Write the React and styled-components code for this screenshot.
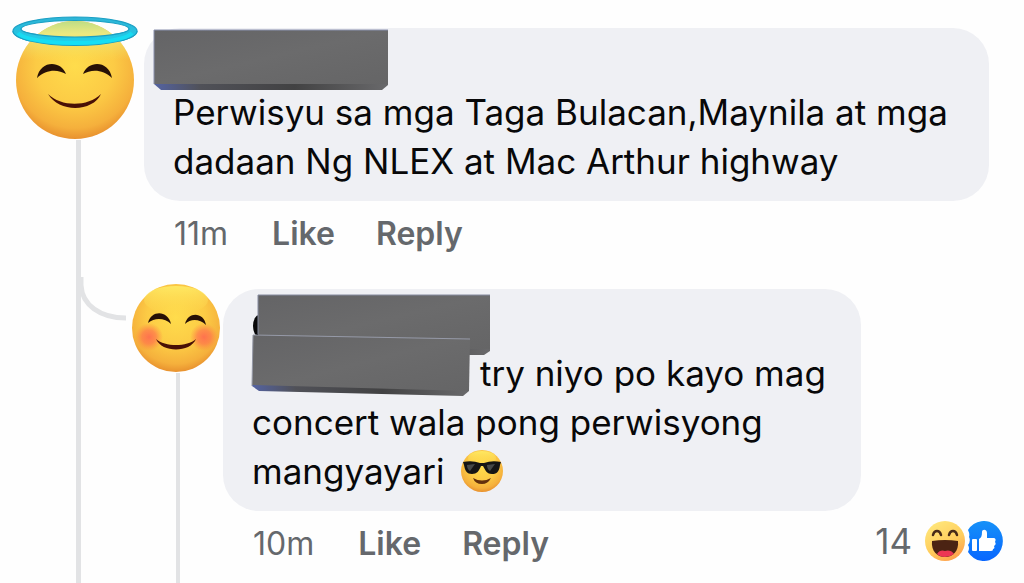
import React from "react";
import styled, { createGlobalStyle } from "styled-components";

const GlobalStyle = createGlobalStyle`
  * {
    box-sizing: border-box;
  }

  body {
    margin: 0;
    background-color: #fefefe;
    font-family: Inter, "Liberation Sans", sans-serif;
    color: #080809;
  }
`;

const Thread = styled.main`
  display: flex;
  min-height: 100vh;
  padding: 14px 20px 0 12px;
`;

const Rail = styled.div`
  display: flex;
  flex-direction: column;
  align-items: center;
  flex: none;
  width: ${(props) => props.$width}px;

  svg {
    display: block;
    flex: none;
  }
`;

const RailLine = styled.div`
  flex: 1;
  width: ${(props) => props.$thickness}px;
  margin-left: ${(props) => props.$thickness}px;
  background-color: #e2e3e5;
`;

const Content = styled.div`
  flex: 1;
  min-width: 0;
  display: flex;
  flex-direction: column;
`;

const CommentBlock = styled.article`
  padding: 14px 15px 0 4px;
`;

const Bubble = styled.div`
  position: relative;
  padding: 0 29px 15px;
  border-radius: 36px;
  background-color: #eff0f4;
`;

const ReplyBubble = styled(Bubble)`
  max-width: 638px;
`;

const NameRow = styled.div`
  height: 60px;
`;

const Cover = styled.svg`
  position: absolute;
  top: ${(props) => props.$top}px;
  left: ${(props) => props.$left}px;
`;

const Message = styled.p`
  margin: 0;
  font-size: 35px;
  line-height: 49px;
  text-indent: ${(props) => props.$indent || 0}px;

  svg {
    margin-left: 6px;
    vertical-align: -9px;
  }
`;

const Footer = styled.div`
  display: flex;
  align-items: center;
  height: 64px;
  padding-left: 30px;
  font-size: 32px;
  color: #65686c;
`;

const Time = styled.time`
  margin-right: 44px;
`;

const Action = styled.button`
  margin: 0 41px 0 0;
  padding: 0;
  border: none;
  background: none;
  font: inherit;
  font-weight: 600;
  color: inherit;
  cursor: pointer;
`;

const Reactions = styled.div`
  display: flex;
  align-items: center;
  margin-left: auto;
  padding-bottom: 5px;
  font-size: 35px;

  svg {
    display: block;
  }
`;

const Count = styled.span`
  margin-right: 13px;
`;

const ReplyBlock = styled.article`
  position: relative;
  display: flex;
  flex: 1;
  gap: 3px;
  margin-left: -8px;
  padding-top: 18px;
`;

const ReplyContent = styled.div`
  flex: 1;
  min-width: 0;
  padding-top: 6px;
`;

const Connector = styled.svg`
  position: absolute;
  top: 12px;
  left: -55px;
`;

const FaceFill = ({ id }) => (
  <defs>
    <radialGradient id={id} cx="0.5" cy="0.38" r="0.66">
      <stop offset="0" stopColor="#ffdc4c" />
      <stop offset="0.5" stopColor="#fccb45" />
      <stop offset="0.8" stopColor="#f5b03c" />
      <stop offset="1" stopColor="#e38428" />
    </radialGradient>
    <linearGradient id={`${id}-shine`} x1="0" y1="0" x2="0" y2="1">
      <stop offset="0" stopColor="#fff06a" stopOpacity="0.8" />
      <stop offset="1" stopColor="#ffe054" stopOpacity="0" />
    </linearGradient>
  </defs>
);

const HaloRing = (props) => (
  <g {...props}>
    <path
      d="M13 31 A62 14 0 0 1 137 31 A62 14.5 0 0 1 13 31Z M21 29 A54 8 0 0 0 129 29 A54 8.5 0 0 0 21 29Z"
      fillRule="evenodd"
      fill="url(#halo-ring)"
      stroke="#1a9fc4"
      strokeWidth="1.2"
    />
    <path d="M18 33 C24 40 50 43 75 43 C100 43 126 40 132 33" fill="none" stroke="#12e4f8" strokeWidth="4" opacity="0.7" />
  </g>
);

const HaloAvatar = () => (
  <svg width="128" height="126" viewBox="12 14 128 126" role="img" aria-label="Commenter">
    <FaceFill id="halo-face" />
    <defs>
      <linearGradient id="halo-ring" x1="0" y1="0" x2="0" y2="1">
        <stop offset="0" stopColor="#2fb4d6" />
        <stop offset="0.6" stopColor="#25c4e2" />
        <stop offset="1" stopColor="#1cd6ee" />
      </linearGradient>
      <linearGradient id="halo-top" x1="0" y1="0" x2="0" y2="1">
        <stop offset="0" stopColor="#b9dc86" />
        <stop offset="0.35" stopColor="#ecec86" stopOpacity="0.9" />
        <stop offset="1" stopColor="#f5e55e" stopOpacity="0" />
      </linearGradient>
      <clipPath id="halo-face-area">
        <circle cx="75" cy="80" r="59" />
      </clipPath>
      <clipPath id="halo-front">
        <rect x="12" y="31" width="128" height="18" />
      </clipPath>
    </defs>
    <HaloRing />
    <circle cx="75" cy="80" r="59" fill="url(#halo-face)" />
    <rect x="16" y="20" width="118" height="40" fill="url(#halo-top)" clipPath="url(#halo-face-area)" />
    <HaloRing clipPath="url(#halo-front)" />
    <path d="M37 78 C40 60 61 60 66 74 C58 69 46 69 37 78Z" fill="#271006" />
    <path d="M83 74 C88 60 109 60 112 78 C103 69 91 69 83 74Z" fill="#271006" />
    <path d="M48 94 C61 107 88 107 101 94 C93 112 59 113 48 94Z" fill="#491006" />
  </svg>
);

const BlushAvatar = () => (
  <svg width="88" height="90" viewBox="132 283 88 90" role="img" aria-label="Replier">
    <FaceFill id="blush-face" />
    <defs>
      <radialGradient id="blush-cheek">
        <stop offset="0" stopColor="#ff6450" stopOpacity="0.85" />
        <stop offset="0.5" stopColor="#ff6e4c" stopOpacity="0.65" />
        <stop offset="1" stopColor="#ff8240" stopOpacity="0" />
      </radialGradient>
    </defs>
    <circle cx="176" cy="328" r="44" fill="url(#blush-face)" />
    <ellipse cx="176" cy="300" rx="32" ry="14" fill="url(#blush-face-shine)" />
    <circle cx="149" cy="337" r="14" fill="url(#blush-cheek)" />
    <circle cx="204" cy="337" r="14" fill="url(#blush-cheek)" />
    <path d="M148 323 C151 310 168 310 171 324 C165 318 155 317 148 323Z" fill="#271006" />
    <path d="M185 324 C188 311 204 312 206 325 C200 319 191 318 185 324Z" fill="#271006" />
    <path d="M156 339 C165 347 187 347 196 339 C190 353 162 353 156 339Z" fill="#491006" />
  </svg>
);

const SunglassesEmoji = () => (
  <svg width="44" height="44" viewBox="0 0 44 44" role="img" aria-label="cool face">
    <FaceFill id="cool-face" />
    <circle cx="22" cy="22" r="21" fill="url(#cool-face)" />
    <ellipse cx="22" cy="9" rx="14" ry="7" fill="url(#cool-face-shine)" />
    <path
      d="M3 13 Q12 11 20 14 L24 14 Q32 11 41 13 L40 16 C39 24 36 25 32 25 C26 25 25 20 23 17 L21 17 C19 22 17 25 12 25 C7 25 5 22 4 16Z"
      fill="#151515"
    />
    <path d="M7 16 L15 15 L10 22 Q7 20 7 16Z M27 16 L35 15 L30 22 Q27 20 27 16Z" fill="#57595a" opacity="0.75" />
    <path d="M13 29 Q22 34 31 29 Q28 35 22 35 Q15 35 13 29Z" fill="#63300d" />
  </svg>
);

const HahaIcon = () => (
  <svg width="40" height="40" viewBox="0 0 40 40" role="img" aria-label="Haha">
    <defs>
      <linearGradient id="haha-face" x1="0.25" y1="0" x2="0.8" y2="1">
        <stop offset="0" stopColor="#ffe77b" />
        <stop offset="0.55" stopColor="#ffcd5c" />
        <stop offset="1" stopColor="#ff9a4a" />
      </linearGradient>
    </defs>
    <circle cx="20" cy="20" r="20" fill="url(#haha-face)" />
    <path
      d="M8 14 Q9 10 12 10 Q15 10 16 14 M24 14 Q25 10 28 10 Q31 10 32 14"
      fill="none"
      stroke="#482b18"
      strokeWidth="2.5"
      strokeLinecap="round"
    />
    <path d="M7 20 Q20 18 33 20 C34 30 28 36 20 36 C12 36 6 30 7 20Z" fill="#4b2313" />
    <path d="M12 33 C14 29 18 29 20 30 C22 29 27 29 29 33 Q25 36 20 36 Q15 36 12 33Z" fill="#ed3554" />
  </svg>
);

const LikeIcon = () => (
  <svg width="39" height="40" viewBox="0 0 39 40" role="img" aria-label="Like">
    <defs>
      <linearGradient id="like-disc" x1="0" y1="0" x2="0" y2="1">
        <stop offset="0" stopColor="#1691f8" />
        <stop offset="1" stopColor="#0866ff" />
      </linearGradient>
    </defs>
    <path d="M3 9 A19 20 0 1 1 3 31 Q5 27 3 24 Q6 20 4 16 Q5 13 3 9Z" fill="url(#like-disc)" />
    <rect x="7" y="18" width="5" height="12" rx="1" fill="#fff" />
    <path
      d="M14 18 C16 17 17 15 17 11 C17 8 22 8 22 12 C22 14 22 16 22 17 H28 C31 17 31 19 30 21 C31 22 31 24 29 25 C30 27 29 28 28 28 C28 30 27 30 24 30 H14Z"
      fill="#fff"
    />
  </svg>
);

const CoverFill = () => (
  <defs>
    <linearGradient id="cover-edge" x1="0" y1="0" x2="1" y2="0">
      <stop offset="0" stopColor="#5463a2" />
      <stop offset="0.2" stopColor="#505158" />
      <stop offset="0.6" stopColor="#424243" />
      <stop offset="1" stopColor="#69696b" />
    </linearGradient>
    <linearGradient id="cover-front" x1="0" y1="0" x2="1" y2="1">
      <stop offset="0" stopColor="#646466" />
      <stop offset="0.5" stopColor="#6b6b6c" />
      <stop offset="1" stopColor="#656566" />
    </linearGradient>
  </defs>
);

const CommentCover = () => (
  <Cover width="236" height="62" viewBox="0 0 236 62" $top={1} $left={9} aria-hidden="true">
    <CoverFill />
    <path d="M1 53 H235 V56 L229 61 H8 L1 55Z" fill="url(#cover-edge)" />
    <path d="M1 1 H235 V55 H1Z" fill="url(#cover-front)" />
    <path d="M1 55 V1 H235" fill="none" stroke="#8a91ae" />
  </Cover>
);

const ReplyCover = () => (
  <Cover width="240" height="108" viewBox="0 0 240 108" $top={5} $left={28} aria-hidden="true">
    <ellipse cx="8" cy="32" rx="6" ry="11" fill="#080809" />
    <path d="M7 54 H239 V57 L233 61 H7Z" fill="url(#cover-edge)" />
    <path d="M7 1 H239 V55 H7Z" fill="url(#cover-front)" />
    <path d="M7 40 V1 H239" fill="none" stroke="#858b9f" />
    <path d="M1 90 L218 96 V97 L212 102 L8 97 L1 92Z" fill="url(#cover-edge)" />
    <path d="M2 41 L219 45 L218 97 L1 91Z" fill="url(#cover-front)" />
    <path d="M1 92 L2 41 L219 45" fill="none" stroke="#969aa8" />
  </Cover>
);

const CommentFooter = ({ time, children }) => (
  <Footer>
    <Time>{time}</Time>
    <Action type="button">Like</Action>
    <Action type="button">Reply</Action>
    {children}
  </Footer>
);

const App = () => {
  return (
    <>
      <GlobalStyle />
      <Thread>
        <Rail $width={128}>
          <HaloAvatar />
          <RailLine $thickness={5} />
        </Rail>
        <Content>
          <CommentBlock>
            <Bubble>
              <NameRow>
                <CommentCover />
              </NameRow>
              <Message>
                Perwisyu sa mga Taga Bulacan,Maynila at mga dadaan Ng NLEX at
                Mac Arthur highway
              </Message>
            </Bubble>
            <CommentFooter time="11m" />
          </CommentBlock>
          <ReplyBlock>
            <Connector width="50" height="44" viewBox="0 0 50 44" aria-hidden="true">
              <path d="M4 0 V8 C5 28 23 41 49 41" fill="none" stroke="#e2e3e5" strokeWidth="5" />
            </Connector>
            <Rail $width={88}>
              <BlushAvatar />
              <RailLine $thickness={4} />
            </Rail>
            <ReplyContent>
              <ReplyBubble>
                <NameRow>
                  <ReplyCover />
                </NameRow>
                <Message $indent={228}>
                  try niyo po kayo mag concert wala pong perwisyong mangyayari{" "}
                  <SunglassesEmoji />
                </Message>
              </ReplyBubble>
              <CommentFooter time="10m">
                <Reactions>
                  <Count>14</Count>
                  <HahaIcon />
                  <LikeIcon />
                </Reactions>
              </CommentFooter>
            </ReplyContent>
          </ReplyBlock>
        </Content>
      </Thread>
    </>
  );
};

export default App;
